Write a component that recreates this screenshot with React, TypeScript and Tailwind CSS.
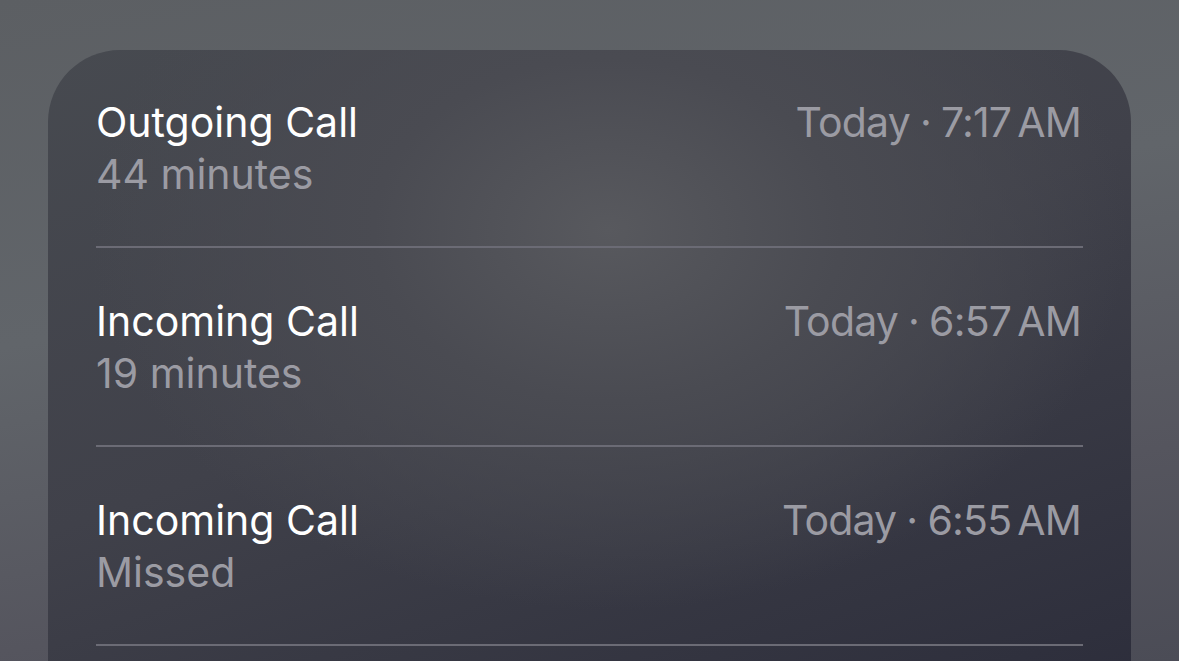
const calls = [
  { title: 'Outgoing Call', detail: '44 minutes', time: '7:17' },
  { title: 'Incoming Call', detail: '19 minutes', time: '6:57' },
  { title: 'Incoming Call', detail: 'Missed', time: '6:55' },
];

export default function App() {
  return (
    <div className="h-[661px] w-[1179px] overflow-hidden bg-[linear-gradient(170deg,#5c5f63_0%,#61656a_40%,#55555e_75%,#4b4c56_100%)] px-[48px] pt-[50px] font-['Inter','Noto_Sans',sans-serif]">
      <div className="h-[680px] rounded-t-[72px] bg-[radial-gradient(ellipse_520px_380px_at_560px_180px,#58595e_0%,#4a4b52_45%,transparent_100%),linear-gradient(160deg,#474a50_0%,#40414a_45%,#2b2c3a_100%)] px-[48px] pt-[46px]">
        {calls.map((c, i) => (
          <div
            key={i}
            className={`flex items-start justify-between border-b-2 border-[#6b6b75] pb-[46px] ${i === 0 ? '' : 'pt-[47px]'}`}
          >
            <div className="flex flex-col text-[41px] leading-[52px]">
              <span className="text-white">{c.title}</span>
              <span className="text-[#9b9ba3]">{c.detail}</span>
            </div>
            <span className="flex items-baseline pr-[2px] text-[41px] leading-[52px] tracking-[-0.8px] text-[#9b9ba3]">
              <span>Today</span>
              <span className="mx-[10px]">·</span>
              <span>{c.time}</span>
              <span className="ml-[6px]">AM</span>
            </span>
          </div>
        ))}
      </div>
    </div>
  );
}
